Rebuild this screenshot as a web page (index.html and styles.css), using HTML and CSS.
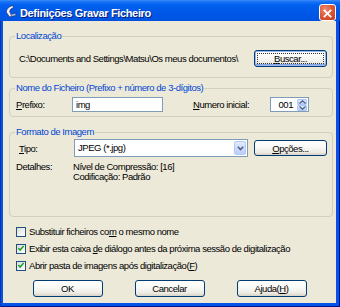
FILE: index.html
```html
<!DOCTYPE html>
<html lang="pt">

<head>
  <meta charset="UTF-8">
  <meta name="viewport" content="width=device-width, initial-scale=1.0">
  <title>Definições Gravar Ficheiro</title>
  <link rel="stylesheet" href="styles.css">
</head>

<body>
  <div class="window">
    <div class="titleBar">
      <svg class="appIcon" width="13" height="13" viewBox="0 0 13 13">
        <path d="M9 0.5 C5 1.5 2 4 2.5 7.5 L5.5 12 L8.5 11 L6 7.5 C5.3 5.5 6.5 3.5 9.5 2.8 Z" fill="#EEF0F8" stroke="#1B2B70" stroke-width="0.7" />
        <path d="M6.5 9.5 L11 8.3 L12.3 10.3 L8 11.5 Z" fill="#A9B9E0" stroke="#1B2B70" stroke-width="0.5" />
      </svg>
      <span class="title">Definições Gravar Ficheiro</span>
      <span class="closeBtn">
        <svg width="17" height="17" viewBox="0 0 17 17">
          <path d="M5 5 L12 12 M12 5 L5 12" stroke="#fff" stroke-width="2" stroke-linecap="square" />
        </svg>
      </span>
    </div>

    <div class="dialog">
      <fieldset class="group groupLoc">
        <legend>Localização</legend>
        <div class="locRow">
          <span class="path">C:\Documents and Settings\Matsu\Os meus documentos\</span>
          <button class="btn btnDefault"><u>B</u>uscar...</button>
        </div>
      </fieldset>

      <fieldset class="group groupName">
        <legend>Nome do Ficheiro (Prefixo + número de 3-dígitos)</legend>
        <div class="nameRow">
          <span class="prefixLabel"><u>P</u>refixo:</span>
          <span class="textBox prefixBox">img</span>
          <span class="numLabel"><u>N</u>umero inicial:</span>
          <span class="spinBox">
            <span class="spinValue">001</span>
            <span class="spinBtns">
              <span class="spinBtn">
                <svg width="7" height="4" viewBox="0 0 7 4"><path d="M0.5 3.5 L3.5 0.8 L6.5 3.5" fill="none" stroke="#4D6185" stroke-width="1.2" /></svg>
              </span>
              <span class="spinBtn">
                <svg width="7" height="4" viewBox="0 0 7 4"><path d="M0.5 0.5 L3.5 3.2 L6.5 0.5" fill="none" stroke="#4D6185" stroke-width="1.2" /></svg>
              </span>
            </span>
          </span>
        </div>
      </fieldset>

      <fieldset class="group groupFormat">
        <legend>Formato de Imagem</legend>
        <div class="typeRow">
          <span class="typeLabel"><u>T</u>ipo:</span>
          <span class="combo">
            <span class="comboValue">JPEG (*.jpg)</span>
            <span class="comboBtn">
              <svg width="7" height="5" viewBox="0 0 7 5"><path d="M0.8 0.8 L3.5 3.6 L6.2 0.8" fill="none" stroke="#4D6185" stroke-width="1.6" /></svg>
            </span>
          </span>
          <button class="btn btnOptions"><u>O</u>pções...</button>
        </div>
        <div class="details">
          <span>Detalhes:</span>
          <span>Nível de Compressão: [16]</span>
          <span></span>
          <span>Codificação: Padrão</span>
        </div>
      </fieldset>

      <div class="checks">
        <div class="checkRow">
          <span class="checkBox"></span>
          <span>Substituir ficheiros co<u>m</u> o mesmo nome</span>
        </div>
        <div class="checkRow">
          <span class="checkBox checked">
            <svg width="9" height="9" viewBox="0 0 9 9"><path d="M1.5 4 L3.5 6.2 L7.5 1.8" fill="none" stroke="#21A121" stroke-width="1.7" /></svg>
          </span>
          <span>Exibir esta caixa <u>d</u>e diálogo antes da próxima sessão de digitalização</span>
        </div>
        <div class="checkRow">
          <span class="checkBox checked">
            <svg width="9" height="9" viewBox="0 0 9 9"><path d="M1.5 4 L3.5 6.2 L7.5 1.8" fill="none" stroke="#21A121" stroke-width="1.7" /></svg>
          </span>
          <span>Abrir pasta de imagens após digitalização(<u>F</u>)</span>
        </div>
      </div>

      <div class="actions">
        <button class="btn btnAction">OK</button>
        <button class="btn btnAction">Cancelar</button>
        <button class="btn btnAction">Ajuda(<u>H</u>)</button>
      </div>
    </div>
  </div>
</body>

</html>
```

FILE: styles.css
```css
* {
  box-sizing: border-box;
}

body {
  margin: 0;
  font-family: "Liberation Sans", Arial, sans-serif;
  font-size: 9.5px;
  letter-spacing: -0.45px;
  color: #000;
}

.window {
  width: 340px;
  height: 307px;
  background: #0553E6;
  box-shadow: inset 1px 0 #0838A8, inset -1px 0 #00138C, inset 0 -1px #00138C;
  display: flex;
  flex-direction: column;
}

.titleBar {
  height: 21px;
  display: flex;
  align-items: center;
  padding: 0 4px 0 4px;
  background: linear-gradient(#3D8DFB 0, #1570F6 2px, #0060EE 5px, #0058E8 12px, #0055E4 19px, #0050DA 21px);
}

.appIcon {
  flex: none;
  margin-top: 2px;
}

.title {
  margin-left: 3px;
  margin-top: 4px;
  color: #fff;
  font-weight: bold;
  font-size: 11px;
  letter-spacing: -0.35px;
  text-shadow: 1px 1px #0A1E80;
}

.closeBtn {
  margin-left: auto;
  margin-top: 4px;
  width: 17px;
  height: 17px;
  border: 1px solid #fff;
  border-radius: 3px;
  background: radial-gradient(circle at 35% 30%, #EE8B6E 0, #DD5B3C 45%, #C23A1A 100%);
  display: flex;
}

.dialog {
  height: 282px;
  margin: 0 4px 0 3px;
  background: #ECE9D8;
  display: flex;
  flex-direction: column;
}

.group {
  margin: 0 3px 0 6px;
  padding: 0 5px 0 6px;
  border: 1px solid #D0D0BF;
  border-radius: 4px;
  min-width: 0;
}

.group legend {
  color: #0046D5;
  line-height: 12px;
  height: 12px;
  padding: 0 1px;
  margin-left: -1px;
}

.groupLoc {
  margin-top: 9px;
  padding-top: 8px;
  padding-bottom: 10px;
}

.groupName {
  margin-top: 4px;
  padding-top: 3px;
  padding-bottom: 4px;
}

.groupFormat {
  margin-top: 9px;
  padding-top: 1px;
  padding-bottom: 34px;
}

.locRow,
.nameRow,
.typeRow {
  display: flex;
  align-items: center;
}

.path {
  margin-left: 3px;
}

.btn {
  font: inherit;
  letter-spacing: inherit;
  color: #000;
  height: 17px;
  padding: 0;
  border: 1px solid #003C74;
  border-radius: 3px;
  background: linear-gradient(#FFFFFF 0, #FAFAF8 40%, #EDEBE4 80%, #D8D2C6 100%);
}

.locRow .btn {
  margin-left: auto;
  width: 73px;
}

.btnDefault {
  position: relative;
  box-shadow: inset 0 0 0 1px #9DB9EB, inset 0 -1px 0 1px #7DA2E6;
}

.btnDefault::after {
  content: "";
  position: absolute;
  inset: 2px;
  border: 1px dotted #333;
}

.prefixLabel {
  width: 56px;
}

.textBox {
  height: 15px;
  border: 1px solid #7F9DB9;
  background: #fff;
  line-height: 13px;
  padding-left: 3px;
}

.prefixBox {
  width: 91px;
}

.numLabel {
  margin-left: 30px;
  width: 77px;
}

.spinBox {
  width: 39px;
  height: 15px;
  border: 1px solid #7F9DB9;
  background: #fff;
  display: flex;
  padding: 1px;
}

.spinValue {
  flex: 1;
  text-align: right;
  line-height: 11px;
  padding-right: 4px;
}

.spinBtns {
  width: 10px;
  display: flex;
  flex-direction: column;
}

.spinBtn {
  flex: 1;
  display: flex;
  align-items: center;
  justify-content: center;
  background: linear-gradient(#DDE8FE, #B8CDF9);
  border: 1px solid #B1C7F3;
  border-radius: 1px;
}

.typeLabel {
  margin-left: 3px;
  width: 55px;
}

.combo {
  width: 174px;
  height: 18px;
  border: 1px solid #7F9DB9;
  background: #fff;
  display: flex;
  padding: 1px;
}

.comboValue {
  flex: 1;
  line-height: 14px;
  padding-left: 2px;
}

.comboBtn {
  width: 12px;
  display: flex;
  align-items: center;
  justify-content: center;
  background: linear-gradient(#E2EAFE, #B9CEFA);
  border: 1px solid #B4C9F5;
  border-radius: 2px;
}

.btnOptions {
  margin-left: 6px;
  width: 73px;
  height: 16px;
}

.details {
  margin-top: 5px;
  display: grid;
  grid-template-columns: 57px auto;
  line-height: 10px;
}

.checks {
  margin-top: 6px;
  padding-left: 13px;
}

.checkRow {
  height: 17px;
  display: flex;
  align-items: center;
  gap: 3px;
}

.checkBox {
  width: 10px;
  height: 10px;
  border: 1px solid #1C5180;
  background: linear-gradient(135deg, #DCDCD7, #FFFFFF);
  display: flex;
  align-items: center;
  justify-content: center;
}

.actions {
  margin-top: 6px;
  display: flex;
  justify-content: center;
  gap: 32px;
}

.btnAction {
  width: 70px;
}
```
